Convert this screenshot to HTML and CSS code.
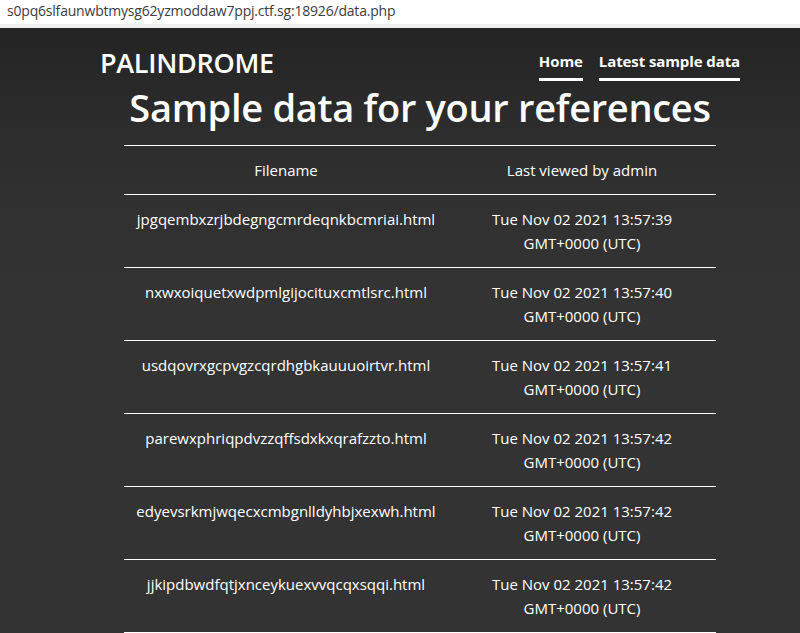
FILE: index.html
```html
<!DOCTYPE html>
<html lang="en">
<head>
<meta charset="utf-8">
<title>Sample data</title>
<link rel="stylesheet" href="styles.css">
</head>
<body>
<div class="urlbar">s0pq6slfaunwbtmysg62yzmoddaw7ppj.ctf.sg:18926/data.php</div>
<div class="page">
  <div class="container">
    <header class="top">
      <div class="brand">PALINDROME</div>
      <nav class="nav">
        <a class="nav-link" href="#">Home</a>
        <a class="nav-link" href="#">Latest sample data</a>
      </nav>
    </header>
    <h1 class="title">Sample data for your references</h1>
    <table class="data">
      <thead>
        <tr><th class="col-file">Filename</th><th class="col-time">Last viewed by admin</th></tr>
      </thead>
      <tbody>
        <tr><td>jpgqembxzrjbdegngcmrdeqnkbcmriai.html</td><td>Tue Nov 02 2021 13:57:39<br>GMT+0000 (UTC)</td></tr>
        <tr><td>nxwxoiquetxwdpmlgijocituxcmtlsrc.html</td><td>Tue Nov 02 2021 13:57:40<br>GMT+0000 (UTC)</td></tr>
        <tr><td>usdqovrxgcpvgzcqrdhgbkauuuoirtvr.html</td><td>Tue Nov 02 2021 13:57:41<br>GMT+0000 (UTC)</td></tr>
        <tr><td>parewxphriqpdvzzqffsdxkxqrafzzto.html</td><td>Tue Nov 02 2021 13:57:42<br>GMT+0000 (UTC)</td></tr>
        <tr><td>edyevsrkmjwqecxcmbgnlldyhbjxexwh.html</td><td>Tue Nov 02 2021 13:57:42<br>GMT+0000 (UTC)</td></tr>
        <tr><td>jjkipdbwdfqtjxnceykuexvvqcqxsqqi.html</td><td>Tue Nov 02 2021 13:57:42<br>GMT+0000 (UTC)</td></tr>
      </tbody>
    </table>
  </div>
</div>
</body>
</html>
```

FILE: styles.css
```css
html, body {
  margin: 0;
  padding: 0;
  height: 100%;
  overflow: hidden;
}
body {
  font-family: "Open Sans", "Noto Sans", sans-serif;
  background: #333333;
}
.urlbar {
  height: 24px;
  line-height: 22px;
  background: #ffffff;
  border-bottom: 4px solid #f0f0f0;
  color: #3c3c3c;
  font-size: 14px;
  padding-left: 7px;
  letter-spacing: -0.2px;
}
.page {
  background: linear-gradient(to bottom, #242424 0px, #2e2e2e 120px, #333333 260px);
  min-height: 620px;
  color: #ffffff;
}
.container {
  width: 640px;
  margin-left: 100px;
}
.top {
  display: flex;
  justify-content: space-between;
  align-items: flex-start;
  padding-top: 19px;
}
.brand {
  font-size: 27px;
  line-height: 32px;
  font-weight: 600;
  letter-spacing: -0.3px;
}
.nav {
  display: flex;
  gap: 16px;
  margin-top: 4px;
}
.nav-link {
  color: #ffffff;
  text-decoration: none;
  font-size: 15px;
  font-weight: 700;
  line-height: 20px;
  padding-bottom: 7px;
  border-bottom: 3px solid #ffffff;
  letter-spacing: -0.1px;
}
.title {
  margin: 4px 0 16px;
  text-align: center;
  font-size: 38px;
  line-height: 44px;
  font-weight: 600;
  letter-spacing: -0.3px;
}
.data {
  width: 592px;
  margin: 0 auto;
  border-collapse: collapse;
  font-size: 15px;
  line-height: 24px;
}
.data th, .data td {
  padding: 12px 0;
  text-align: center;
  vertical-align: top;
  font-weight: 400;
  border-bottom: 1px solid #ffffff;
}
.data thead th {
  border-top: 1px solid #ffffff;
}
.col-file {
  width: 324px;
}
```
